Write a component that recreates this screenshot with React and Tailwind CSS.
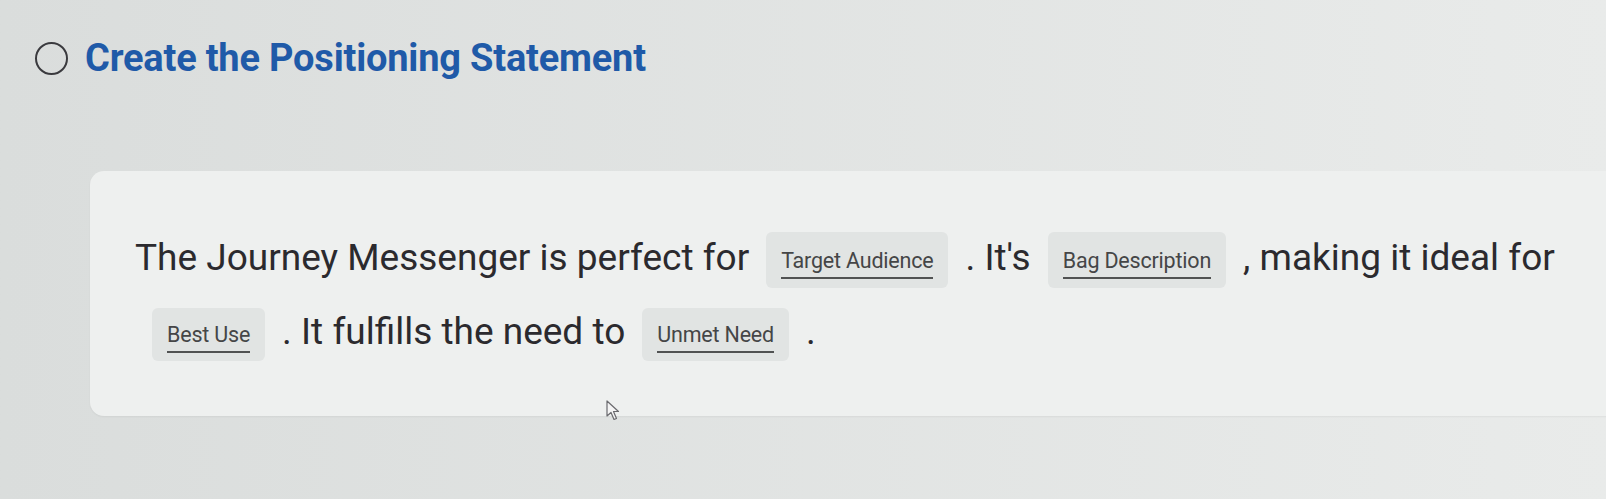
export default function App() {
  const Chip = ({ label, h = "h-[56px]" }) => (
    <span className={`inline-flex ${h} flex-col items-center justify-center rounded-md bg-[#e1e4e3] px-[15px] align-middle mx-[17px] pt-[6px]`}>
      <span className="text-[21.5px] leading-[25px] tracking-[-0.2px] text-[#454647]">{label}</span>
      <span className="mt-[4px] h-[2px] w-full bg-[#505252]" />
    </span>
  );
  return (
    <div
      className="relative h-[499px] w-[1606px] overflow-hidden bg-gradient-to-r from-[#dadddc] to-[#e9ebea]"
      style={{ fontFamily: "Roboto, 'Noto Sans', sans-serif" }}
    >
      <div className="flex items-center pl-[35px] pt-[37px]">
        <span className="inline-block h-[33px] w-[33px] rounded-full border-[2.5px] border-[#3a3a3e]" />
        <h1 className="ml-[17px] text-[38px] font-bold leading-[42px] tracking-[-0.2px] text-[#1f5aa8]">
          Create the Positioning Statement
        </h1>
      </div>
      <div className="ml-[90px] mt-[92px] w-[1560px] rounded-[14px] bg-[#eef0ef] pb-[47px] pl-[45px] pr-[48px] pt-[50px] shadow-[0_1px_2px_rgba(0,0,0,0.05)]">
        <p className="w-[1440px] text-[37px] leading-[74px] text-[#2b2a2e]">
          The Journey Messenger is perfect for<Chip label="Target Audience" />. It's<Chip label="Bag Description" />, making it ideal for
          <span className="ml-[-17px]" />
          <Chip label="Best Use" h="h-[53px]" />. It fulfills the need to<Chip label="Unmet Need" h="h-[53px]" />.
        </p>
      </div>
      <svg className="absolute left-[606px] top-[400px]" width="16" height="22" viewBox="0 0 16 22">
        <path d="M1 1 L1 16 L5 12.5 L8 19.5 L10.5 18.5 L7.5 11.5 L12.5 11.5 Z" fill="#f4f4f4" stroke="#6a6a6e" strokeWidth="1.2" strokeLinejoin="round" />
      </svg>
    </div>
  );
}
